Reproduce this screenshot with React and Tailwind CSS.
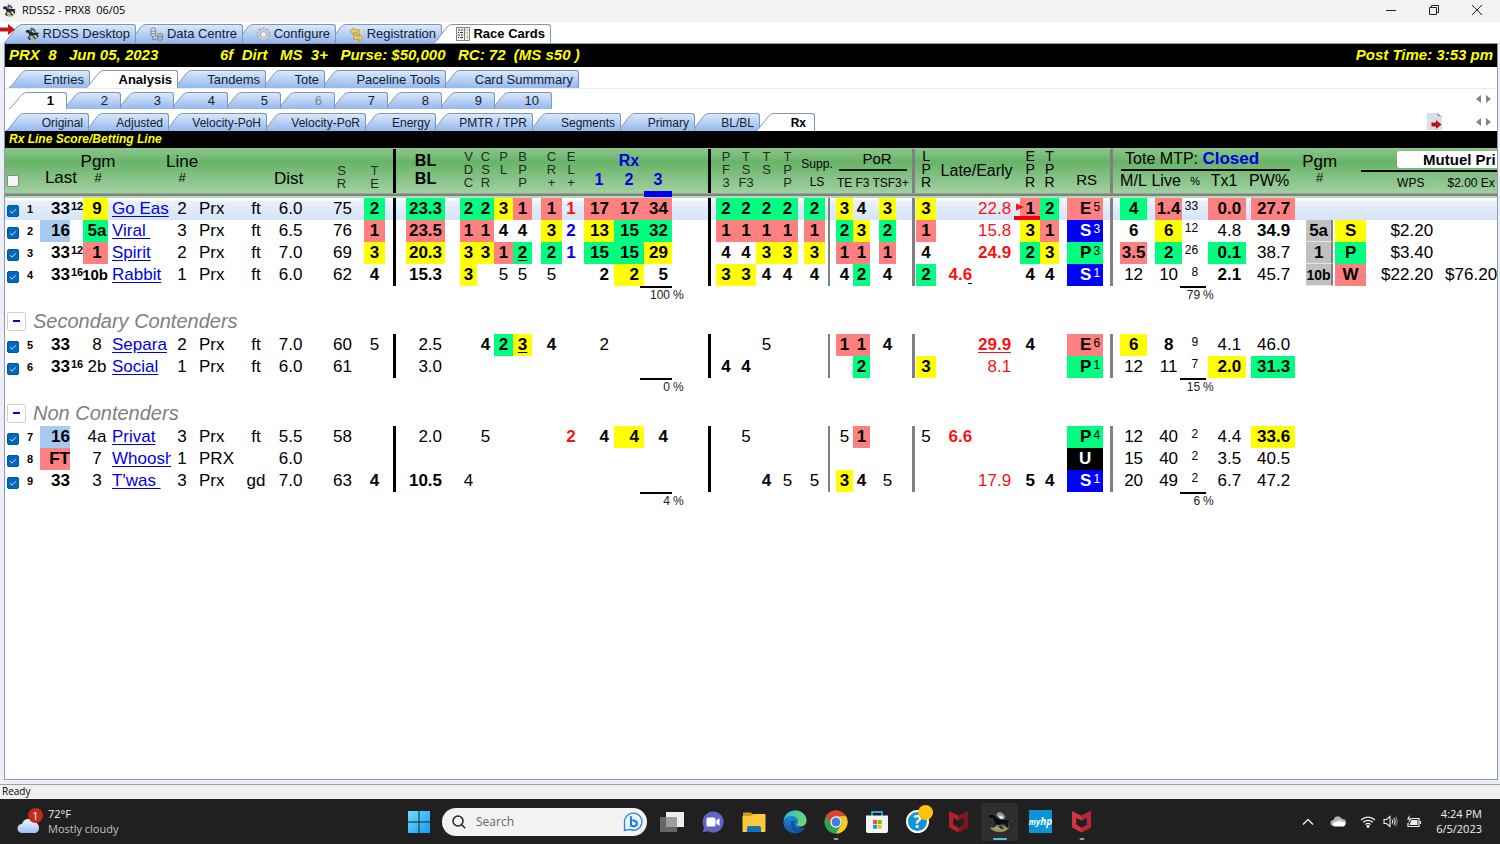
import React from "react";

const TONES = {
  G: "bg-[#00ff80] font-bold",
  R: "bg-[#ff8080] font-bold",
  Y: "bg-[#ffff00] font-bold",
  L: "bg-[#a6caf0] font-bold",
  B: "bg-[#0000ff] font-bold text-white",
  K: "bg-black font-bold text-white",
  b: "font-bold",
  u: "underline underline-offset-2",
  t: "text-[#ff1010]",
  n: "text-[#0000ff]",
};

/* Column order of the card; a column without a key is a spacer, "bar" columns are dividers. */
const COLS = [
  { k: "check", w: "w-[19px]" },
  { k: "num", w: "w-[16px]", c: "text-[11px] font-bold text-left pl-[3px]" },
  { k: "last", w: "w-[30px]", c: "text-right" },
  { k: "sup", w: "w-[13px]", c: "text-[11px] font-bold leading-[12px] align-top pt-[2px] pl-[1px]" },
  { k: "pgm", w: "w-[25px]" },
  { k: "name", w: "w-[66px]" },
  { k: "line", w: "w-[16px]", c: "text-center" },
  { k: "track", w: "w-[50px]", c: "text-left pl-[9px]" },
  { k: "surf", w: "w-[32px]", c: "text-center" },
  { k: "dist", w: "w-[37px]", c: "text-center" },
  { k: "sr", w: "w-[55px]", c: "text-right pr-[12px]" },
  { k: "te", w: "w-[21px]", c: "text-center" },
  { w: "w-[8px]" },
  { k: "bar", w: "w-[3px]", c: "bg-black" },
  { w: "w-[10px]" },
  { k: "bl", w: "w-[39px]", c: "text-right pr-[3px]" },
  { w: "w-[15px]" },
  { k: "vdc", w: "w-[17px]", c: "text-center" },
  { k: "csr", w: "w-[17px]", c: "text-center" },
  { k: "pl", w: "w-[19px]", c: "text-center" },
  { k: "bpp", w: "w-[19px]", c: "text-center" },
  { w: "w-[9px]" },
  { k: "cr", w: "w-[21px]", c: "text-center" },
  { k: "el", w: "w-[18px]", c: "text-center" },
  { w: "w-[4px]" },
  { k: "rx1", w: "w-[30px]", c: "text-right pr-[5px]" },
  { k: "rx2", w: "w-[30px]", c: "text-right pr-[5px]" },
  { k: "rx3", w: "w-[28px]", c: "text-right pr-[4px]" },
  { w: "w-[36px]" },
  { k: "bar", w: "w-[3px]", c: "bg-black" },
  { w: "w-[5px]" },
  { k: "pf3", w: "w-[20px]", c: "text-center" },
  { k: "tsf", w: "w-[20px]", c: "text-center" },
  { k: "ts", w: "w-[21px]", c: "text-center" },
  { k: "tpp", w: "w-[21px]", c: "text-center" },
  { w: "w-[6px]" },
  { k: "ls", w: "w-[21px]", c: "text-center" },
  { w: "w-[3px]" },
  { k: "bar", w: "w-[2px]", c: "bg-[#808080]" },
  { w: "w-[6px]" },
  { k: "pte", w: "w-[17px]", c: "text-center" },
  { k: "pf", w: "w-[17px]", c: "text-center" },
  { w: "w-[9px]" },
  { k: "pts", w: "w-[17px]", c: "text-center" },
  { w: "w-[16px]" },
  { k: "bar", w: "w-[3px]", c: "bg-[#808080]" },
  { w: "w-[1px]" },
  { k: "lpr", w: "w-[20px]", c: "text-center" },
  { k: "late", w: "w-[39px]", c: "text-right pr-[3px]" },
  { k: "early", w: "w-[39px]", c: "text-right pr-[3px]" },
  { w: "w-[6px]" },
  { k: "epr", w: "w-[20px]", c: "text-center" },
  { k: "tpr", w: "w-[19px]", c: "text-center" },
  { w: "w-[8px]" },
  { k: "rs", w: "w-[36px]" },
  { w: "w-[7px]" },
  { k: "bar", w: "w-[3px]", c: "bg-[#808080]" },
  { w: "w-[7px]" },
  { k: "ml", w: "w-[27px]", c: "text-center" },
  { w: "w-[8px]" },
  { k: "live", w: "w-[27px]", c: "text-center" },
  { k: "pct", w: "w-[18px]", c: "text-[12px] leading-[12px] text-right align-top pt-[2px] pr-[2px]" },
  { w: "w-[8px]" },
  { k: "tx1", w: "w-[38px]", c: "text-right pr-[5px]" },
  { w: "w-[5px]" },
  { k: "pw", w: "w-[44px]", c: "text-right pr-[5px]" },
  { w: "w-[11px]" },
  { k: "pgm2", w: "w-[27px]" },
  { w: "w-[2px]" },
  { k: "res", w: "w-[31px]", c: "text-center" },
  { k: "wps", w: "w-[67px]", c: "text-right" },
  { k: "ex", w: "w-[72px]", c: "text-left pl-[12px]" },
];

/* A value may carry flags after a bar: "23.3|G" is 23.3 on green. "-" stands for an empty cell. */
const KEYS = COLS.filter((c) => c.k && c.k !== "bar" && c.k !== "check").map((c) => c.k);
const parse = (line) => {
  const out = {};
  line.split(/\s+/).forEach((v, i) => {
    if (v !== "-") out[KEYS[i]] = v.replace("_", " ");
  });
  return out;
};

const GROUPS = [
  {
    totals: ["100", "79"],
    rows: [
      "1 33|b 12 9|Y Go_Eas 2 Prx ft 6.0 75 2|G 23.3|G 2|G 2|G 3|Y 1|R 1|R 1|tb 17|R 17|R 34|R 2|G 2|G 2|G 2|G 2|G 3|Y 4|b 3|Y 3|Y - 22.8|t 1|Rm 2|G E5|R 4|G 1.4|R 33 0.0|R 27.7|R",
      "2 16|L - 5a|G Viral_ 3 Prx ft 6.5 76 1|R 23.5|R 1|R 1|R 4|b 4|b 3|Y 2|nb 13|Y 15|G 32|G 1|R 1|R 1|R 1|R 1|R 2|G 3|Y 2|G 1|R - 15.8|t 3|Y 1|R S3|B 6|b 6|Y 12 4.8 34.9|b 5a|b S|Y $2.20",
      "3 33|b 12 1|R Spirit 2 Prx ft 7.0 69 3|Y 20.3|Y 3|Y 3|Y 1|R 2|Gu 2|G 1|nb 15|G 15|G 29|Y 4|b 4|b 3|Y 3|Y 3|Y 1|R 1|R 1|R 4|b - 24.9|tb 2|G 3|Y P3|G 3.5|R 2|G 26 0.1|G 38.7 1|b P|G $3.40",
      "4 33|b 16 10b|b Rabbit 1 Prx ft 6.0 62 4|b 15.3|b 3|Y - 5 5 5 - 2|b 2|Y 5|b 3|Y 3|Y 4|b 4|b 4|b 4|b 2|G 4|b 2|G 4.6|tbk - 4|b 4|b S1|B 12 10 8 2.1|b 45.7 10b|b W|R $22.20 $76.20",
    ],
  },
  {
    title: "Secondary Contenders",
    totals: ["0", "15"],
    rows: [
      "5 33|b - 8 Separa 2 Prx ft 7.0 60 5 2.5 - 4|b 2|G 3|Yu 4|b - 2 - - - - 5 - - 1|R 1|R 4|b - - 29.9|tbu 4|b - E6|R 6|Y 8|b 9 4.1 46.0",
      "6 33|b 16 2b Social 1 Prx ft 6.0 61 - 3.0 - - - - - - - - - 4|b 4|b - - - - 2|G - 3|Y - 8.1|t - - P1|G 12 11 7 2.0|Y 31.3|G",
    ],
  },
  {
    title: "Non Contenders",
    totals: ["4", "6"],
    rows: [
      "7 16|L - 4a Privat 3 Prx ft 5.5 58 - 2.0 - 5 - - - 2|tb 4|b 4|Y 4|b - 5 - - - 5 1|R - 5 6.6|tb - - - P4|G 12 40 2 4.4 33.6|Y",
      "8 FT|R - 7 Whoosh 1 PRX - 6.0 - - - - - - - - - - - - - - - - - - - - - - - - - U|K 15 40 2 3.5 40.5",
      "9 33|b - 3 T'was_ 3 Prx gd 7.0 63 4|b 10.5|b 4 - - - - - - - - - - 4|b 5 5 3|Y 4|b 5 - - 17.9|t 5|b 4|b S1|B 20 49 2 6.7 47.2",
    ],
  },
].map((g) => ({ ...g, rows: g.rows.map(parse) }));

function Cell({ col, raw, num }) {
  if (col.k === "check")
    return (
      <td className="p-0">
        <span className="relative ml-[2px] mt-[3px] block h-3 w-3">
          <input type="checkbox" defaultChecked aria-label={`Entry ${num}`} className="peer block h-3 w-3 appearance-none rounded-[2px] border border-[#005a9e] bg-white checked:bg-[#0067c0]" />
          <svg viewBox="0 0 12 12" className="pointer-events-none absolute inset-0 hidden h-3 w-3 peer-checked:block" fill="none" stroke="#d5e9fa" strokeWidth="1">
            <path d="M3 6.2 5 8.2 9 4.2" />
          </svg>
        </span>
      </td>
    );
  if (!col.k) return <td className="p-0" />;
  if (col.k === "bar") return <td className={`p-0 ${col.c}`} />;
  if (!raw) return <td className="p-0" />;
  const [text, flags = ""] = raw.split("|");
  const tone = flags.split("").map((f) => TONES[f] || "").join(" ");
  if (col.k === "name")
    return (
      <td className="p-0 pl-1">
        <a href="#horse" className="block w-[59px] overflow-hidden whitespace-pre text-[#0000ee] underline underline-offset-2">{text}</a>
      </td>
    );
  if (col.k === "pgm")
    return (
      <td className={`p-0 ${tone}`}>
        <span className={`flex whitespace-nowrap ${text.length > 2 ? "justify-end text-[15px]" : "justify-center pl-[3px]"}`}>{text}</span>
      </td>
    );
  if (col.k === "pgm2")
    return (
      <td className="border-r-2 border-b border-r-[#808080] border-b-[#e8e8e8] bg-[#c0c0c0] p-0 font-bold">
        <span className={`flex justify-center leading-[20px] whitespace-nowrap ${text.length > 2 ? "text-[14px]" : ""}`}>{text}</span>
      </td>
    );
  if (col.k === "rs")
    return (
      <td className={`p-0 ${tone}`}>
        <span className="flex justify-center gap-[2px] pl-[10px] leading-[20px]">
          <span className={text[1] ? "" : "pr-[10px]"}>{text[0]}</span>
          {text[1] && <span className="pt-[2px] text-[12px] leading-[12px] font-normal">{text[1]}</span>}
        </span>
      </td>
    );
  return (
    <td className={`p-0 whitespace-nowrap ${col.c} ${tone}`}>
      {flags.includes("m") ? (
        <span className="relative block">
          <svg viewBox="0 0 9 8" className="absolute top-[4px] -left-1 h-2 w-2"><path d="M0 0 9 4 0 8z" fill="#ff1010" /></svg>
          <span className="absolute top-[17px] right-0 -left-[6px] h-1 bg-[#f00000]" />
          {text}
        </span>
      ) : flags.includes("k") ? (
        <span className="relative">
          {text}
          <span className="absolute right-0 bottom-0 h-px w-1 bg-black" />
        </span>
      ) : (
        text
      )}
    </td>
  );
}

function Totals({ values }) {
  const td = "p-0 align-top text-[12px] leading-[14px] text-[#222]";
  return (
    <tr className="h-[22px]">
      <td colSpan={27} className="p-0" />
      <td className={td}><div className="-ml-1 border-t-2 border-black pr-[2px] text-right">{values[0]}</div></td>
      <td className={td}><div className="pt-[2px] pl-[1px]">%</div></td>
      <td colSpan={32} className="p-0" />
      <td className={td}><div className="-mr-[6px] -ml-[2px] border-t-2 border-black pr-[6px] text-right">{values[1]}</div></td>
      <td className={td}><div className="pt-[2px] pl-[3px]">%</div></td>
      <td colSpan={9} className="p-0" />
    </tr>
  );
}

const TH = "p-0 align-top font-normal";

function Stack({ lines, low, strong }) {
  return (
    <th className={TH}>
      <div className={`flex flex-col items-center leading-[13px] whitespace-nowrap ${low ? "pt-[16px]" : "pt-[2px]"} ${strong ? "text-[14px] text-black" : "text-[13px] text-[#1c2c1c]"}`}>
        {lines.map((l, i) => <span key={i}>{l}</span>)}
      </div>
    </th>
  );
}

const Gap = ({ span = 1 }) => <th colSpan={span} className="p-0" />;
const HeadBar = ({ tone }) => <th className={TH}><div className={`mt-px h-11 ${tone}`} /></th>;

const Pound = ({ label, shift = "" }) => (
  <th className={TH}>
    <div className={`flex flex-col items-center pt-[5px] text-[17px] leading-[18px] ${shift}`}>
      <span>{label}</span>
      <span className="text-[13px] leading-[13px]">#</span>
    </div>
  </th>
);

const RxHead = ({ top, n, active }) => (
  <th className={TH}>
    <div className={`flex h-[49px] flex-col items-center pt-[3px] text-[16px] leading-[19px] font-bold text-[#0000dd] ${active ? "border-b-[6px] border-[#0000f0]" : ""}`}>
      <span className="h-[19px]">{top}</span>
      <span>{n}</span>
    </div>
  </th>
);

function CardTable() {
  return (
    <table className="w-[1500px] table-fixed border-separate border-spacing-0 text-[17px] leading-[20px] text-black">
      <colgroup>{COLS.map((c, i) => <col key={i} className={c.w} />)}</colgroup>
      <thead>
        <tr className="h-[50px] bg-[linear-gradient(to_bottom,#8cc68c_0px,#68b468_14px,#a2cfa2_45px,#808080_46px,#808080_48px,#b4dcb4_48px)]">
          <th className={TH}>
            <input type="checkbox" aria-label="All entries" className="mt-[27px] ml-[2px] block h-3 w-3 appearance-none rounded-[2px] border border-[#8a8a8a] bg-[#f5f5f5]" />
          </th>
          <th colSpan={3} className={TH}><div className="pt-[20px] pr-[6px] text-right">Last</div></th>
          <Pound label="Pgm" shift="pl-[5px]" />
          <Gap />
          <Pound label="Line" />
          <Gap span={2} />
          <th className={TH}><div className="flex justify-center pt-[21px] pr-[4px]">Dist</div></th>
          <th className={TH}><div className="flex flex-col items-center pt-[16px] pl-[10px] text-[13px] leading-[13px] text-[#1c2c1c]"><span>S</span><span>R</span></div></th>
          <Stack low lines={["T", "E"]} />
          <Gap />
          <HeadBar tone="bg-black" />
          <Gap />
          <th className={TH}><div className="flex flex-col items-center pt-[4px] text-[16px] leading-[18px] font-bold"><span>BL</span><span>BL</span></div></th>
          <Gap />
          <Stack lines={["V", "D", "C"]} />
          <Stack lines={["C", "S", "R"]} />
          <Stack lines={["P", "L"]} />
          <Stack lines={["B", "P", "P"]} />
          <Gap />
          <Stack lines={["C", "R", "+"]} />
          <Stack lines={["E", "L", "+"]} />
          <Gap />
          <RxHead n="1" />
          <RxHead top="Rx" n="2" />
          <RxHead n="3" active />
          <Gap />
          <HeadBar tone="bg-black" />
          <Gap />
          <Stack lines={["P", "F", "3"]} />
          <Stack lines={["T", "S", "F3"]} />
          <Stack lines={["T", "S"]} />
          <Stack lines={["T", "P", "P"]} />
          <Gap />
          <th className={TH}><div className="flex flex-col items-center gap-[4px] pt-[9px] pl-[5px] text-[12px] leading-[14px] whitespace-nowrap"><span>Supp.</span><span>LS</span></div></th>
          <Gap span={2} />
          <th colSpan={6} className={TH}>
            <div className="mr-[5px] ml-[9px] border-b-2 border-[#1a1a1a] pl-2 text-center text-[15px] leading-[21px]">PoR</div>
            <div className="flex gap-[3px] pt-[5px] pl-[7px] text-[12px] leading-[14px] whitespace-nowrap"><span>TE</span><span>F3</span><span>TSF3+</span></div>
          </th>
          <HeadBar tone="bg-[#808080]" />
          <Gap />
          <Stack strong lines={["L", "P", "R"]} />
          <th colSpan={2} className={TH}><div className="flex justify-center pt-[13px] pl-[3px] text-[16px] whitespace-nowrap">Late/Early</div></th>
          <Gap />
          <Stack strong lines={["E", "P", "R"]} />
          <Stack strong lines={["T", "P", "R"]} />
          <Gap />
          <th className={TH}><div className="flex justify-center pt-[22px] pl-[3px] text-[15px]">RS</div></th>
          <Gap />
          <HeadBar tone="bg-[#808080]" />
          <Gap />
          <th colSpan={8} className={TH}>
            <div className="mr-[5px] ml-[1px] border-b-2 border-black pl-1 text-left text-[16px] leading-[21px] whitespace-nowrap">
              Tote MTP: <b className="text-[17px] text-[#0000dd]">Closed</b>
            </div>
            <div className="grid grid-cols-[26px_40px_18px_40px_50px] pt-[1px] text-center text-[16px] leading-[18px] whitespace-nowrap">
              <span>M/L</span><span>Live</span><span className="text-[11px]">%</span><span>Tx1</span><span>PW%</span>
            </div>
          </th>
          <Gap />
          <Pound label="Pgm" />
          <Gap span={2} />
          <th colSpan={2} className={TH}>
            <div className="-ml-[5px] border-b-2 border-black pt-[3px] pb-[2px]">
              <div className="ml-[36px] rounded-l-[3px] bg-white pl-[26px] text-left text-[15px] leading-[17px] font-bold whitespace-nowrap">Mutuel Pri</div>
            </div>
            <div className="flex gap-[23px] pt-[3px] pl-[31px] text-[12px] leading-[16px] whitespace-nowrap"><span>WPS</span><span>$2.00 Ex</span></div>
          </th>
        </tr>
      </thead>
      {GROUPS.map((g, gi) => (
        <tbody key={gi}>
          {g.title && (
            <tr className="h-[26px]">
              <td colSpan={COLS.length} className="p-0">
                <div className="flex items-center gap-[7px] pl-[2px]">
                  <button type="button" aria-label={`Collapse ${g.title}`} className="flex h-[19px] w-[19px] items-center justify-center rounded-[2px] border border-[#cfcfe8] bg-white">
                    <span className="h-[2px] w-[7px] bg-[#0000f0]" />
                  </button>
                  <span className="text-[20px] leading-[24px] text-[#808080] italic">{g.title}</span>
                </div>
              </td>
            </tr>
          )}
          {g.rows.map((r) => (
            <tr key={r.num} className={`h-[22px] ${r.num === "1" ? "bg-[linear-gradient(to_bottom,#ffffff_2px,#e9f1fc_3px,#d6e4f6_22px)]" : ""}`}>
              {COLS.map((c, i) => <Cell key={i} col={c} raw={c.k && r[c.k]} num={r.num} />)}
            </tr>
          ))}
          <Totals values={g.totals} />
        </tbody>
      ))}
    </table>
  );
}

/* A tab is a sloped leading edge followed by a bordered body. */
function Tab({ w, h, text, active, z, icon, overlap, muted, pad = "pr-[5px]" }) {
  return (
    <button type="button" role="tab" aria-selected={!!active} className={`relative flex shrink-0 items-stretch ${w} ${h} ${overlap} ${active ? "z-20" : z}`}>
      <svg viewBox="0 0 18 20" preserveAspectRatio="none" className="h-full w-[18px] shrink-0">
        <defs>
          <linearGradient id="slope" x1="0" y1="0" x2="0" y2="1">
            <stop offset="0" stopColor="#dbe8fc" />
            <stop offset="1" stopColor="#94b8ee" />
          </linearGradient>
        </defs>
        <path d="M0 20 3 17 13 3Q15.500 .5 18 .5V20z" fill={active ? "#fff" : "url(#slope)"} />
        <path d="M0 20 3 17 13 3Q15.500 .5 18 .5" fill="none" stroke="#7f95b5" />
      </svg>
      <span className={`flex grow items-center justify-end gap-[3px] rounded-tr-[3px] border-t border-r border-[#7f95b5] whitespace-nowrap ${pad} ${active ? "bg-white font-bold text-black" : "bg-linear-to-b from-[#dbe8fc] to-[#94b8ee]"} ${muted ? "text-[#808890]" : "text-[#14202e]"}`}>
        {icon && <span className="-ml-3 shrink-0">{icon}</span>}
        {text}
      </span>
    </button>
  );
}

const STACKING = ["z-[12]", "z-[11]", "z-10", "z-[9]", "z-[8]", "z-[7]", "z-[6]", "z-[5]", "z-[4]", "z-[3]"];

function TabRow({ tabs, h, size, overlap, pad, label, className }) {
  return (
    <div role="tablist" aria-label={label} className={`isolate flex items-end ${size} ${className}`}>
      {tabs.map(([text, w, opt = {}], i) => (
        <Tab key={text} text={text} w={w} h={h} z={STACKING[i]} overlap={i ? overlap : ""} pad={pad} {...opt} />
      ))}
    </div>
  );
}

function Horse({ className = "h-4 w-4" }) {
  return (
    <svg viewBox="0 0 24 22" className={className}>
      <path d="M4 18q8-4 17 0-3 4-9 3.500Q6 21.500 4 18z" fill="#b3b98a" />
      <path d="M1 6.500Q1.500 4 5 4q2 0 3.500 3Q12 9 17 8.500q3-.5 6.500 1.500-2 0-3.500 1 2 2 1.500 5l-2 .5q0-3-2.500-4l-4 .8q3 2 5 5.200l-2 .5q-3-3.500-6.500-5.500L6.500 17l2.500 2.500-1.500 1L4 17l3.500-4Q5.500 11 5 8.500L2 9z" fill="#20272b" />
      <path d="M8 4.500Q9 1.500 12 1.500l3 1.500 2.500 3.500q-2 2.500-5.500 2L8.500 7z" fill="#4a525c" />
      <path d="M10.500 5q3-.5 5 3l-2.500.5q-2-1-2.500-3.500z" fill="#dde2e6" />
      <path d="M8 12.500q4 0 7 3l-1.500.5Q11 14 8 12.500z" fill="#9a7e5a" />
      <circle cx="10.500" cy="2.300" r="1.700" fill="#59647c" />
      <path d="M6 18.500q2-1 4 0M14 19q2-1 4-.5" stroke="#7b3f35" fill="none" />
    </svg>
  );
}

const DataIcon = (
  <svg viewBox="0 0 16 16" className="h-[15px] w-[15px]" stroke="#68717b" strokeWidth=".8">
    <path d="M2 2.500q0-1.500 2.500-1.500T7 2.500v6Q7 10 4.500 10T2 8.500z" fill="#dcded6" />
    <path d="M2 4.500h5M2 7h5" />
    <path d="M4 10v3.500h4" fill="none" />
    <path d="M9 8q0-1 2.800-1t2.700 1v5q0 1.200-2.700 1.200T9 13z" fill="#b5bcb6" />
    <path d="M9 10.500h5.500" />
  </svg>
);
const GearIcon = (
  <svg viewBox="0 0 16 16" className="h-[15px] w-[15px]" fill="none">
    <circle cx="8" cy="8" r="6.300" stroke="#a8adb3" strokeWidth="2.400" strokeDasharray="2.500 1.450" />
    <circle cx="8" cy="8" r="4.500" stroke="#c9cdd1" strokeWidth="2.600" />
    <circle cx="8" cy="8" r="3" fill="#e9f0fb" stroke="#989da4" strokeWidth=".7" />
  </svg>
);
const SwapIcon = (
  <svg viewBox="0 0 16 16" className="h-[15px] w-[15px]" fill="#f5cf52" stroke="#bd8c24" strokeWidth=".8">
    <path d="M1 4.500 5 1v2h6v5H8.500V6H5v2z" />
    <path d="M15 11.500 11 15v-2H5V8.500h2.500V10H11V8z" />
  </svg>
);
const CardIcon = (
  <svg viewBox="0 0 14 14" className="h-[14px] w-[14px]">
    <path d="M.5.5h8v13h-8zM8.500.5h5v13h-5z" fill="#f3f2e8" stroke="#7c7f83" />
    <path d="M2 3h2M5 3h2M2 5.500h1M4 5.500h3M2 8h2M5 8h2M2 10.500h1M4 10.500h3" stroke="#30343a" />
    <path d="M10 3h2M10 6h2" stroke="#9aa0a8" />
    <path d="M11 8.500h1v3h-1z" fill="#c2a83c" />
  </svg>
);

const MAIN_TABS = [
  ["RDSS Desktop", "w-[132px]", { icon: <Horse className="h-[14px] w-[15px]" /> }],
  ["Data Centre", "w-[115px]", { icon: DataIcon }],
  ["Configure", "w-[101px]", { icon: GearIcon }],
  ["Registration", "w-[114px]", { icon: SwapIcon }],
  ["Race Cards", "w-[117px]", { icon: CardIcon, active: true }],
];
const VIEW_TABS = [
  ["Entries", "w-[81px]"],
  ["Analysis", "w-[92px]", { active: true }],
  ["Tandems", "w-[92px]"],
  ["Tote", "w-[63px]"],
  ["Paceline Tools", "w-[125px]"],
  ["Card Summmary", "w-[137px]"],
];
const RACE_TABS = [
  ["1", "w-[58px]", { active: true }],
  ["2", "w-[58px]"],
  ["3", "w-[57px]"],
  ["4", "w-[58px]"],
  ["5", "w-[57px]"],
  ["6", "w-[58px]", { muted: true }],
  ["7", "w-[57px]"],
  ["8", "w-[58px]"],
  ["9", "w-[57px]"],
  ["10", "w-[61px]"],
];
const LINE_TABS = [
  ["Original", "w-[83px]"],
  ["Adjusted", "w-[84px]"],
  ["Velocity-PoH", "w-[102px]"],
  ["Velocity-PoR", "w-[103px]"],
  ["Energy", "w-[74px]"],
  ["PMTR / TPR", "w-[101px]"],
  ["Segments", "w-[92px]"],
  ["Primary", "w-[78px]"],
  ["BL/BL", "w-[69px]"],
  ["Rx", "w-[59px]", { active: true, pad: "pr-[8px]" }],
];

function Scroll() {
  return (
    <span className="flex gap-[5px] pr-[6px]">
      <button type="button" aria-label="Scroll tabs left"><svg viewBox="0 0 5 8" className="h-2 w-[5px]"><path d="M5 0v8L0 4z" fill="#858585" /></svg></button>
      <button type="button" aria-label="Scroll tabs right"><svg viewBox="0 0 5 8" className="h-2 w-[5px]"><path d="M0 0v8l5-4z" fill="#858585" /></svg></button>
    </span>
  );
}

const McAfee = ({ tone, dark }) => (
  <svg viewBox="0 0 22 24" className="h-[23px] w-[21px]">
    <path d="M1 1 11 6 21 1v17l-10 5.500L1 18z" fill={tone} />
    <path d="M11 6 21 1v17l-10 5.500v-5l5.500-3V8.500L11 11z" fill={dark} />
    <path d="M5.500 8.300 11 11l5.500-2.700v7.200L11 18.500l-5.500-3z" fill="#202020" />
  </svg>
);

const TASKS = [
  {
    name: "Task view",
    icon: (
      <svg viewBox="0 0 24 22" className="h-[22px] w-6">
        <rect x="6" y="1" width="18" height="15" fill="#ededed" />
        <rect x="0" y="6" width="17" height="15" fill="#666" />
        <rect x="6" y="6" width="11" height="10" fill="#9c9c9c" />
      </svg>
    ),
  },
  {
    name: "Chat",
    icon: (
      <svg viewBox="0 0 22 22" className="h-[22px] w-[22px]">
        <path d="M11 .5a10.500 10.500 0 1 1-5 19.700L.8 21.300 2 16.300A10.500 10.500 0 0 1 11 .5z" fill="#6263c4" />
        <rect x="4.500" y="6.500" width="9" height="9" rx="1.500" fill="#fff" />
        <path d="M14.300 9.500 17.500 7v8l-3.200-2.500z" fill="#fff" />
      </svg>
    ),
  },
  {
    name: "File Explorer",
    icon: (
      <svg viewBox="0 0 24 22" className="h-[22px] w-6">
        <path d="M1 1.500h8l2 2.500h12v5H1z" fill="#d89b13" />
        <path d="M1 5h8l2-2h12q.5 0 .5.500V20q0 1-1 1h-21q-1 0-1-1V5z" fill="#fcc93c" />
        <path d="M5 21v-4q0-2 2-2h10q2 0 2 2v4z" fill="#1470b8" />
      </svg>
    ),
  },
  {
    name: "Edge",
    icon: (
      <svg viewBox="0 0 24 24" className="h-6 w-6">
        <defs>
          <linearGradient id="edgeA" x1="0" y1="0" x2="1" y2=".3"><stop offset="0" stopColor="#2cb4ea" /><stop offset="1" stopColor="#65dc6c" /></linearGradient>
          <linearGradient id="edgeB" x1="0" y1="0" x2="0" y2="1"><stop offset="0" stopColor="#1e96dc" /><stop offset="1" stopColor="#0f58a8" /></linearGradient>
        </defs>
        <path d="M12 .5C18.500.5 23.500 5 23.500 10c0 4-3 6-6 6-1 0-2-.2-2.700-.5 1.700 3 5 3 7.200 2A11.500 11.500 0 1 1 12 .5z" fill="url(#edgeB)" />
        <path d="M.8 10C2 4 6.500.5 12 .5c7 0 11.500 5 11.500 10 0 4-3 6-6 6-2.500 0-4-1-4-2s1.500-1.500 1.500-3.500C15 8 12 6 8.500 6 5 6 2 7.500.8 10z" fill="url(#edgeA)" />
        <path d="M8.500 11c-2 4 .5 11 7 11.500 3-.9 5-2.500 6.500-5-4.500 2.500-10.500 1.500-11-3-.1-1.500.5-2.500 1.500-3.500z" fill="#1750a0" />
      </svg>
    ),
  },
  {
    name: "Chrome",
    dot: true,
    icon: (
      <svg viewBox="0 0 24 24" className="h-6 w-6">
        <circle cx="12" cy="12" r="11.500" fill="#31a350" />
        <path d="M2 6.200A11.500 11.500 0 0 1 22 6.200H12A5.800 5.800 0 0 0 7 15z" fill="#e2402f" />
        <path d="M22 6.200A11.500 11.500 0 0 1 12 23.500L17 15a5.800 5.800 0 0 0-5-8.800z" fill="#fbc81e" />
        <circle cx="12" cy="12" r="5.700" fill="#fff" />
        <circle cx="12" cy="12" r="4.500" fill="#3d7de8" />
      </svg>
    ),
  },
  {
    name: "Microsoft Store",
    icon: (
      <svg viewBox="0 0 24 24" className="h-6 w-6">
        <path d="M7 6V2h10v4" fill="none" stroke="#2aa5dd" strokeWidth="1.800" />
        <path d="M1 5.500h22V21q0 2-2 2H3q-2 0-2-2z" fill="#f4f4f4" />
        <path d="M8 10h4v4H8z" fill="#f05325" /><path d="M12.700 10h4v4h-4z" fill="#7fba00" />
        <path d="M8 14.700h4v4H8z" fill="#04a4ef" /><path d="M12.700 14.700h4v4h-4z" fill="#ffb903" />
      </svg>
    ),
  },
  {
    name: "Help",
    icon: (
      <span className="relative flex h-[23px] w-[23px] items-center justify-center rounded-full border-2 border-white bg-[#0d96d6] font-['Open_Sans',sans-serif] text-[17px] font-bold text-white">
        ?<span className="absolute -top-[7px] -right-[6px] h-[15px] w-[15px] rounded-full bg-[#ffc30b]" />
      </span>
    ),
  },
  { name: "McAfee", icon: <McAfee tone="#b5202a" dark="#7d161d" /> },
  {
    name: "RDSS2",
    active: true,
    icon: (
      <svg viewBox="0 0 24 22" className="h-[22px] w-6">
        <path d="M2 17q8-5 19-1-2 5-9 5T2 17z" fill="#8f9a62" />
        <path d="M5 18q3-2 6 0M13 19q3-2 6-1" stroke="#c9a24f" fill="none" />
        <path d="M0 5Q2 2.500 5 3.500q2 0 4 3.500 4 2 8 1.500 4-.5 7 2-3 0-4 1 1 3 0 5h-2q0-3-2-3.500l-4 .5q3 2 4 4.500h-2.500Q10 14.500 8 13.500L5.500 17 4 16l3-4Q5 10 4.500 7.500L1 8z" fill="#090b0c" stroke="#59605e" strokeWidth=".5" />
        <path d="M8 3.500Q9.500.5 12.500 1l3 2 2 3.500q-3 2-6 1z" fill="#8d97a6" />
        <path d="M10 5q4-1.500 6 2.500l-3 .8z" fill="#e9ecef" />
        <path d="M9 14q4 0 6 3" stroke="#d65a4a" fill="none" />
      </svg>
    ),
  },
  {
    name: "myHP",
    icon: (
      <span className="flex h-[23px] w-[23px] items-center justify-center bg-[#0a96d6] font-['Open_Sans',sans-serif] text-[8px] font-bold text-white italic">
        my<span className="text-[10px]">hp</span>
      </span>
    ),
  },
  { name: "McAfee Security", dot: true, icon: <McAfee tone="#d3343e" dark="#b32832" /> },
];

const UI = "font-['Open_Sans','Noto_Sans',sans-serif]";

function Taskbar() {
  return (
    <footer className={`grid h-[45px] shrink-0 grid-cols-[1fr_auto_1fr] items-center bg-[#202020] text-[11px] text-[#f0f0f0] ${UI}`}>
      <button type="button" className="flex items-center gap-[5px] pl-[17px] text-left leading-[15px]">
        <svg viewBox="0 0 26 27" className="h-[27px] w-[26px]">
          <defs><linearGradient id="cloud" x1="0" y1="0" x2="0" y2="1"><stop offset="0" stopColor="#f4f8ff" /><stop offset="1" stopColor="#9dbdf0" /></linearGradient></defs>
          <path d="M5 25a4.500 4.500 0 0 1 0-9 7 7 0 0 1 12.500-2A6 6 0 0 1 19 25z" fill="url(#cloud)" />
          <circle cx="18.500" cy="7.500" r="7.500" fill="#c42b1c" />
          <text x="18.500" y="11.500" textAnchor="middle" fontSize="11" fill="#fff">1</text>
        </svg>
        <span className="pb-[2px]"><span className="block">72°F</span><span className="block text-[#c0c0c0]">Mostly cloudy</span></span>
      </button>
      <div className="flex items-center">
        <button type="button" aria-label="Start" className="flex w-[41px] justify-center">
          <svg viewBox="0 0 22 22" className="h-[22px] w-[22px]">
            <defs><linearGradient id="win" x1="0" y1="0" x2="1" y2="1"><stop offset="0" stopColor="#6fdcff" /><stop offset="1" stopColor="#119cf0" /></linearGradient></defs>
            <path d="M0 0h10.500v10.500H0zM11.500 0H22v10.500H11.500zM0 11.500h10.500V22H0zM11.500 11.500H22V22H11.500z" fill="url(#win)" />
          </svg>
        </button>
        <label className="mr-1 ml-[3px] flex h-7 w-[205px] items-center rounded-full bg-[#f2f2f2] pr-1 pl-[10px]">
          <svg viewBox="0 0 14 14" className="h-[14px] w-[14px] shrink-0" fill="none" stroke="#222" strokeWidth="1.500"><circle cx="6" cy="6" r="5" /><path d="M9.700 9.700 13.300 13.300" /></svg>
          <input type="text" aria-label="Search" placeholder="Search" className="ml-[10px] w-0 grow bg-transparent text-[12px] text-black outline-none placeholder:text-[#666]" />
          <svg viewBox="0 0 20 20" className="h-5 w-5 shrink-0">
            <path d="M10.500 1.200a8.500 8.500 0 1 1-3.700 16.200L1.500 18.500V9.700a8.700 8.700 0 0 1 9-8.500z" fill="#e9f5ff" stroke="#2b7de0" strokeWidth="1.300" />
            <path d="M8 5v8.500" stroke="#1c7be6" strokeWidth="2" strokeLinecap="round" />
            <path d="M10 8.200q4 .8 4 3.300 0 2.500-3.500 2.800L8 13.500" fill="none" stroke="#1c7be6" strokeWidth="2" strokeLinecap="round" strokeLinejoin="round" />
          </svg>
        </label>
        {TASKS.map((t) => (
          <button key={t.name} type="button" aria-label={t.name} className="relative flex h-[38px] w-[41px] items-center justify-center">
            {t.active && <span className="absolute inset-x-[2px] inset-y-0 rounded-[3px] bg-[#2e2e2e]" />}
            <span className="relative">{t.icon}</span>
            {(t.active || t.dot) && (
              <span className={`absolute bottom-px left-1/2 h-[2px] -translate-x-1/2 rounded-full ${t.active ? "w-[14px] bg-[#5cb8ec]" : "w-[5px] bg-[#9a9a9a]"}`} />
            )}
          </button>
        ))}
      </div>
      <div className="flex items-center justify-end pr-[18px]">
        <svg viewBox="0 0 12 8" className="mr-[16px] h-2 w-3" fill="none" stroke="#eee" strokeWidth="1.300"><path d="M1 6.500 6 1.500l5 5" /></svg>
        <svg viewBox="0 0 16 11" className="mr-[14px] h-[11px] w-4"><path d="M3.500 10a3 3 0 0 1 0-6A4.500 4.500 0 0 1 12 3a3.500 3.500 0 0 1 1 7z" fill="#b5b5b5" /><path d="M4 10.500a2.500 2.500 0 0 1 1-4.500l5-1.500 4.500 2a2.500 2.500 0 0 1-1 4z" fill="#fff" /></svg>
        <svg viewBox="0 0 16 13" className="mr-[7px] h-[13px] w-4" fill="none" stroke="#eee" strokeWidth="1.200">
          <path d="M1 5a10 10 0 0 1 14 0M3.200 7.300a7 7 0 0 1 9.600 0M5.400 9.500a4 4 0 0 1 5.200 0" /><circle cx="8" cy="11.300" r="1" fill="#eee" />
        </svg>
        <svg viewBox="0 0 15 13" className="mr-[8px] h-[13px] w-[15px]" fill="none" stroke="#eee" strokeWidth="1.100">
          <path d="M1 4.500h2.500L7 1.500v10L3.500 8.500H1zM9 4.500q1.500 2 0 4M10.800 3q2.600 3.500 0 7" /><path d="M12.600 1.500q3 5 0 10" stroke="#888" />
        </svg>
        <svg viewBox="0 0 16 13" className="mr-[14px] h-[13px] w-4" fill="none" stroke="#eee" strokeWidth="1.200">
          <path d="M5.500 3.500h7.500v8H2V8" /><path d="M14.500 6v3" /><path d="M5.500 5h6v5H3.500z" fill="#eee" stroke="none" /><path d="M3.500 0 1 4.500h2.500L2 8.500 6 3.500H3.500z" fill="#eee" stroke="none" />
        </svg>
        <span className="pb-[2px] text-right leading-[15px] whitespace-nowrap">4:24 PM<br />6/5/2023</span>
      </div>
    </footer>
  );
}

const WinButton = ({ label, children }) => (
  <button type="button" aria-label={label} className="flex w-[43px] items-center justify-center">
    <svg viewBox="0 0 12 12" className="h-3 w-3" fill="none" stroke="#222">{children}</svg>
  </button>
);

export default function App() {
  return (
    <div className="flex min-h-screen flex-col overflow-hidden bg-white font-['Liberation_Sans',Arial,sans-serif] text-black">
      <header className={`flex h-[22px] shrink-0 items-stretch bg-[#f3f3f3] pr-[2px] pb-[2px] pl-[2px] ${UI}`}>
        <div className="flex grow items-center gap-[5px] text-[11px] whitespace-pre">
          <Horse className="h-[13px] w-[15px]" />
          <h1>RDSS2 - PRX8  06/05</h1>
        </div>
        <WinButton label="Minimize"><path d="M1 6.500h10" /></WinButton>
        <WinButton label="Restore"><path d="M1.500 3.500h7v7h-7zM3.500 3V1.500h7v7H9" /></WinButton>
        <WinButton label="Close"><path d="M1 1 11 11M11 1 1 11" /></WinButton>
      </header>

      <div className="relative h-[21px] shrink-0 pl-1">
        <svg viewBox="0 0 15 11" className="absolute top-[2px] left-0 z-10 h-[11px] w-[15px]"><path d="M0 3.500h8V0l7 5.500L8 11V7.500H0z" fill="#c4161c" /></svg>
        <TabRow label="Modules" tabs={MAIN_TABS} h="h-[19px]" size="text-[13px]" overlap="-ml-2" className="pt-[2px]" />
      </div>

      <main className="flex grow flex-col bg-[#eceef8] pr-[2px] pb-1 pl-1">
        <div className="flex grow flex-col overflow-hidden border border-[#8f97b3] bg-white">
          <div className="flex h-[23px] shrink-0 items-center justify-between bg-black pr-1 pl-1 text-[15px] font-bold whitespace-pre text-[#ffff00] italic">
            <p className="flex">
              <span className="w-[211px]">PRX  8   Jun 05, 2023</span>
              <span>6f  Dirt   MS  3+   Purse: $50,000   RC: 72  (MS s50 )</span>
            </p>
            <p>Post Time: 3:53 pm</p>
          </div>
          <TabRow label="Views" tabs={VIEW_TABS} h="h-[18px]" size="text-[13px]" overlap="-ml-1" className="border-b border-[#ececec] pt-[3px] pl-1" />
          <div className="flex items-center justify-between">
            <TabRow label="Races" tabs={RACE_TABS} h="h-[17px]" size="text-[13px]" overlap="-ml-1" pad="pr-[12px]" className="pt-[3px] pl-1" />
            <Scroll />
          </div>
          <div className="flex items-center justify-between">
            <TabRow label="Lines" tabs={LINE_TABS} h="h-[18px]" size="text-[12px]" overlap="-ml-1" className="pt-[4px] pl-px" />
            <div className="flex items-center gap-[34px] pt-[3px]">
              <button type="button" aria-label="Export page">
                <svg viewBox="0 0 15 17" className="h-[17px] w-[15px]">
                  <path d="M0 0h11l4 4v13H0z" fill="#d9deec" /><path d="M10 0l1 3 4 1z" fill="#8a8f9a" />
                  <path d="M4.500 9.500H9V7l5.500 4.500L9 16v-2.500H4.500z" fill="#bd1414" />
                </svg>
              </button>
              <Scroll />
            </div>
          </div>
          <h2 className="h-[17px] shrink-0 bg-black pl-1 text-[12px] leading-[16px] font-bold text-[#ffff00] italic">Rx Line Score/Betting Line</h2>
          <div className="grow overflow-hidden"><CardTable /></div>
        </div>
      </main>

      <p className={`h-[15px] shrink-0 border-t border-[#9aa0b4] bg-[#f0f0f0] pl-[2px] text-[10px] leading-[13px] ${UI}`}>Ready</p>
      <Taskbar />
    </div>
  );
}
